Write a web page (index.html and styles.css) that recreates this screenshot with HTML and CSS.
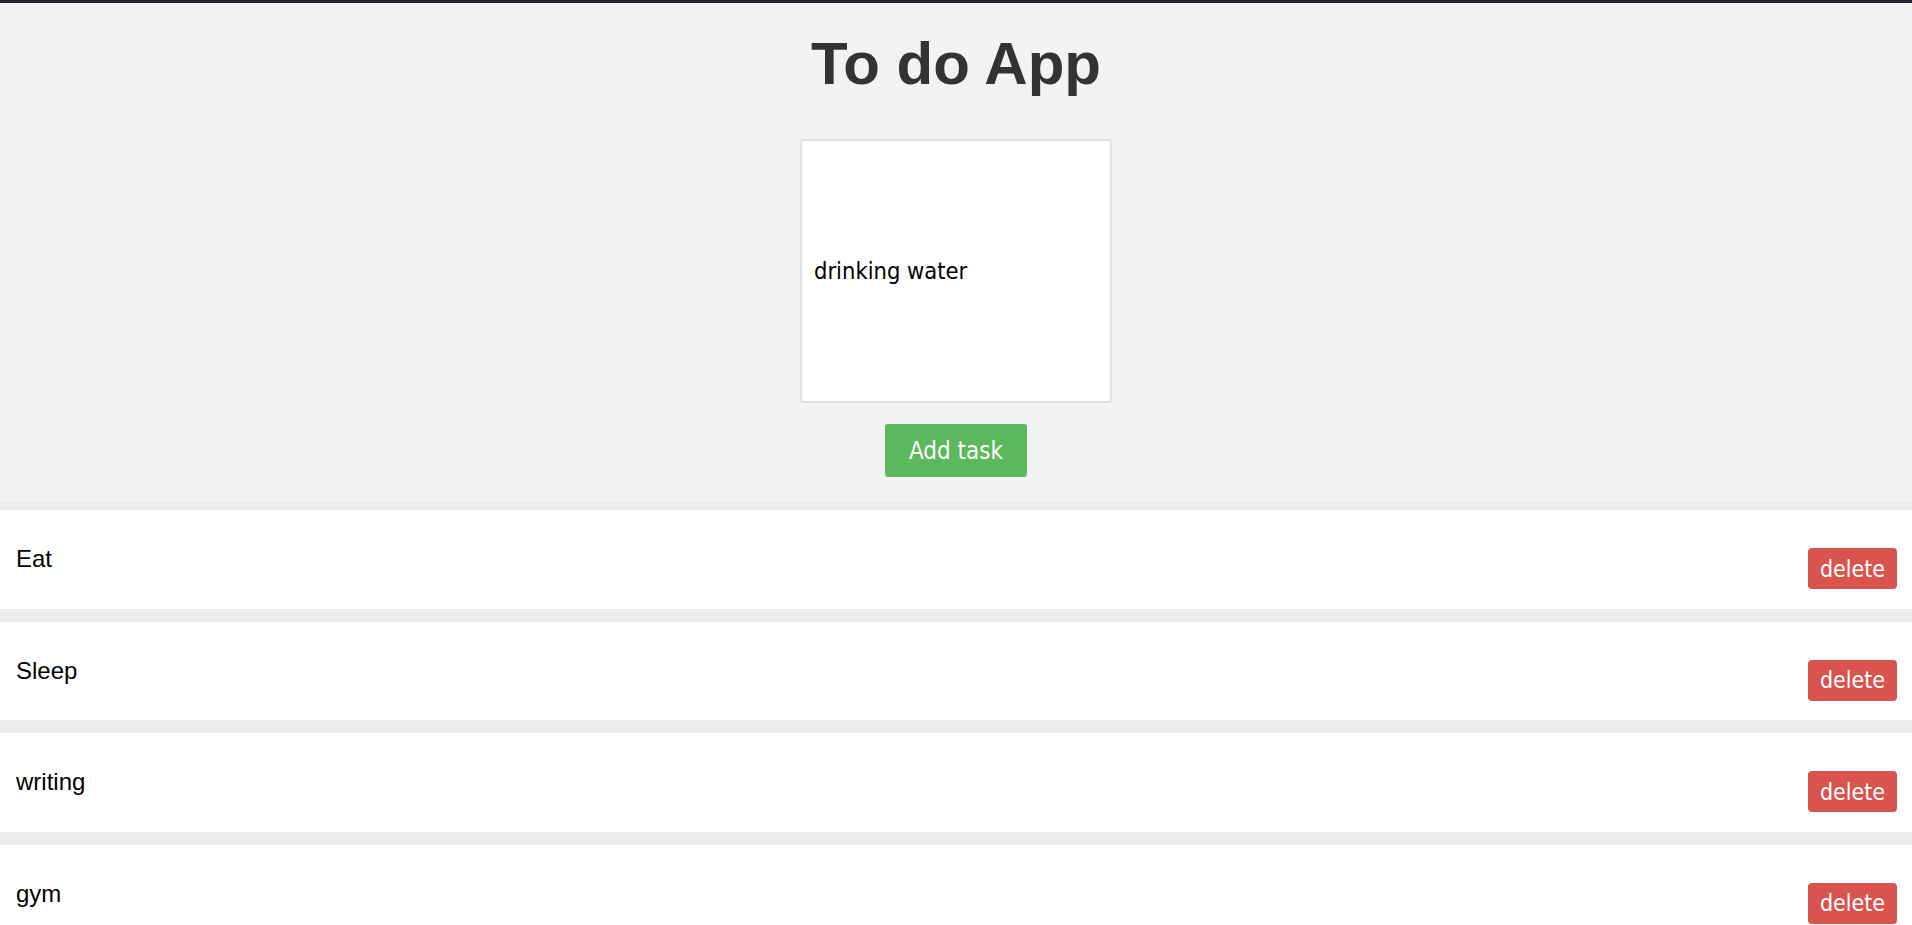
FILE: index.html
```html
<!DOCTYPE html>
<html lang="en">
<head>
<meta charset="utf-8">
<title>To do App</title>
<link rel="stylesheet" href="styles.css">
</head>
<body>
  <header class="top">
    <h1 class="title">To do App</h1>
    <form class="add-form">
      <input class="task-input" type="text" value="drinking water">
      <button class="add-btn" type="button">Add task</button>
    </form>
  </header>
  <ul class="tasks">
    <li class="task"><span class="task-text">Eat</span><button class="del-btn" type="button">delete</button></li>
    <li class="task"><span class="task-text">Sleep</span><button class="del-btn" type="button">delete</button></li>
    <li class="task"><span class="task-text">writing</span><button class="del-btn" type="button">delete</button></li>
    <li class="task"><span class="task-text">gym</span><button class="del-btn" type="button">delete</button></li>
  </ul>
</body>
</html>
```

FILE: styles.css
```css
html, body {
  margin: 0;
  padding: 0;
}

body {
  border-top: 3px solid #24242c;
  background: #ebebeb;
  font-family: "Liberation Sans", Arial, sans-serif;
  overflow: hidden;
  height: 922px;
}

.top {
  background: #f3f3f3;
  display: flex;
  flex-direction: column;
  align-items: center;
  padding-bottom: 25px;
}

.title {
  margin: 26px 0 0;
  font-size: 60px;
  line-height: 69px;
  font-weight: bold;
  color: #333;
}

.add-form {
  display: flex;
  flex-direction: column;
  align-items: center;
  margin-top: 41px;
}

.task-input {
  box-sizing: border-box;
  width: 312px;
  height: 264px;
  border: 2px solid #e0e0e0;
  border-radius: 3px;
  background: #fff;
  padding: 0 12px;
  font-family: "DejaVu Sans Condensed", "DejaVu Sans", sans-serif;
  font-size: 23.5px;
  color: #000;
  outline: none;
}

.add-btn {
  margin-top: 21px;
  width: 142px;
  height: 53px;
  border: none;
  border-radius: 3px;
  background: #5cb85c;
  color: #fff;
  font-family: "DejaVu Sans Condensed", "DejaVu Sans", sans-serif;
  font-size: 24px;
  padding: 0;
}

.tasks {
  list-style: none;
  margin: 0;
  padding: 0;
  background: linear-gradient(#f3f3f3, #ebebeb 8px);
}

.task {
  box-sizing: border-box;
  height: 98.5px;
  margin-top: 13px;
  background: #fff;
  display: flex;
  align-items: center;
  justify-content: space-between;
  padding: 0 15px 0 16px;
}

.task:first-child {
  margin-top: 8px;
}

.task-text {
  font-size: 24px;
  line-height: 28px;
  color: #000;
}

.del-btn {
  align-self: flex-start;
  margin-top: 38px;
  width: 89px;
  height: 41px;
  border: none;
  border-radius: 4px;
  background: #d9534f;
  color: #fff;
  font-family: "DejaVu Sans Condensed", "DejaVu Sans", sans-serif;
  font-size: 23px;
  padding: 0;
}
```
